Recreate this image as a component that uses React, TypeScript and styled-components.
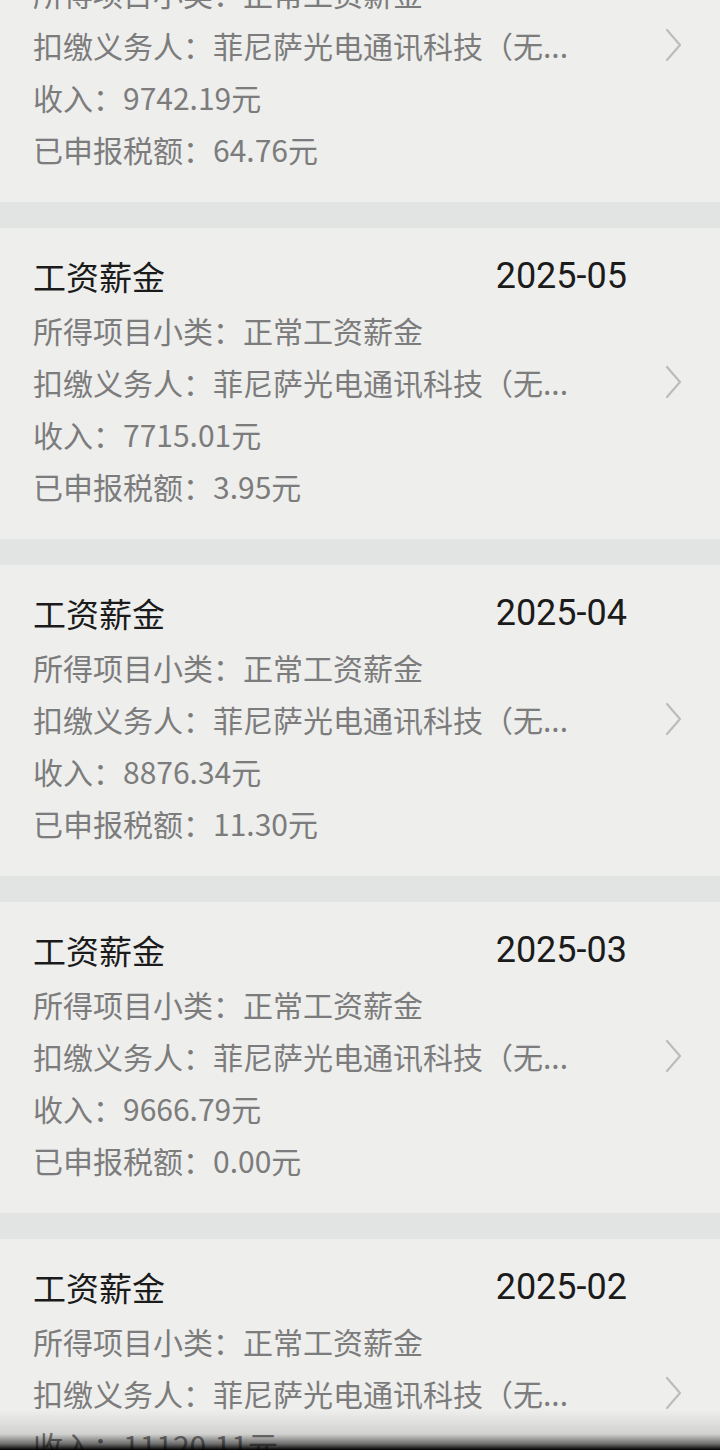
import styled, { createGlobalStyle } from "styled-components";

const GlobalStyle = createGlobalStyle`
  html, body {
    margin: 0;
    padding: 0;
    background: #e2e3e3;
  }
  body {
    font-family: "Noto Sans CJK SC", "Noto Sans", sans-serif;
    overflow: hidden;
  }
`;

type Record = {
  month: string;
  income: string;
  tax: string;
};

const records: Record[] = [
  { month: "2025-06", income: "9742.19", tax: "64.76" },
  { month: "2025-05", income: "7715.01", tax: "3.95" },
  { month: "2025-04", income: "8876.34", tax: "11.30" },
  { month: "2025-03", income: "9666.79", tax: "0.00" },
  { month: "2025-02", income: "11120.11", tax: "0.00" },
];

function Chevron() {
  return (
    <svg width="20" height="34" viewBox="0 0 20 34" fill="none">
      <path
        d="M4 2 L17 17 L4 32"
        stroke="#bcbcbc"
        strokeWidth="2.2"
        strokeLinecap="round"
        strokeLinejoin="round"
      />
    </svg>
  );
}

function RecordCard({ month, income, tax }: Record) {
  return (
    <Card>
      <Header>
        <Title>工资薪金</Title>
        <Month>{month}</Month>
      </Header>
      <Body>
        <Rows>
          <Row>所得项目小类：正常工资薪金</Row>
          <Row>扣缴义务人：菲尼萨光电通讯科技（无...</Row>
          <Row>收入：{income}元</Row>
          <Row>已申报税额：{tax}元</Row>
        </Rows>
        <Arrow>
          <Chevron />
        </Arrow>
      </Body>
    </Card>
  );
}

export default function App() {
  return (
    <Screen>
      <GlobalStyle />
      <List>
        {records.map((r) => (
          <RecordCard key={r.month} {...r} />
        ))}
      </List>
      <BottomShade />
    </Screen>
  );
}

const Screen = styled.div`
  position: relative;
  width: 720px;
  height: 1450px;
  overflow: hidden;
  background: #e2e3e3;
`;

const List = styled.div`
  display: flex;
  flex-direction: column;
  gap: 26px;
  margin-top: -109px;
`;

const Card = styled.section`
  background: #eeeeed;
  padding: 28px 37px 27px 33px;
  display: flex;
  flex-direction: column;
  gap: 8px;
`;

const Header = styled.div`
  display: flex;
  justify-content: space-between;
  align-items: center;
  height: 40px;
  padding-right: 56px;
`;

const Title = styled.div`
  font-size: 33px;
  font-weight: 400;
  color: #1b1b1b;
`;

const Month = styled.div`
  font-family: Roboto, "Noto Sans", sans-serif;
  font-size: 36px;
  color: #1b1b1b;
`;

const Body = styled.div`
  display: flex;
  justify-content: space-between;
`;

const Rows = styled.div`
  display: flex;
  flex-direction: column;
`;

const Row = styled.div`
  height: 52px;
  line-height: 52px;
  font-size: 30px;
  color: #7c7c7c;
  white-space: nowrap;
`;

const Arrow = styled.div`
  display: flex;
  align-items: center;
  height: 52px;
  margin-top: 52px;
`;

const BottomShade = styled.div`
  position: absolute;
  left: 0;
  right: 0;
  bottom: 0;
  height: 40px;
  background: linear-gradient(
    to bottom,
    rgba(0, 0, 0, 0) 0%,
    rgba(0, 0, 0, 0.12) 60%,
    rgba(0, 0, 0, 0.55) 85%,
    #000 100%
  );
`;
